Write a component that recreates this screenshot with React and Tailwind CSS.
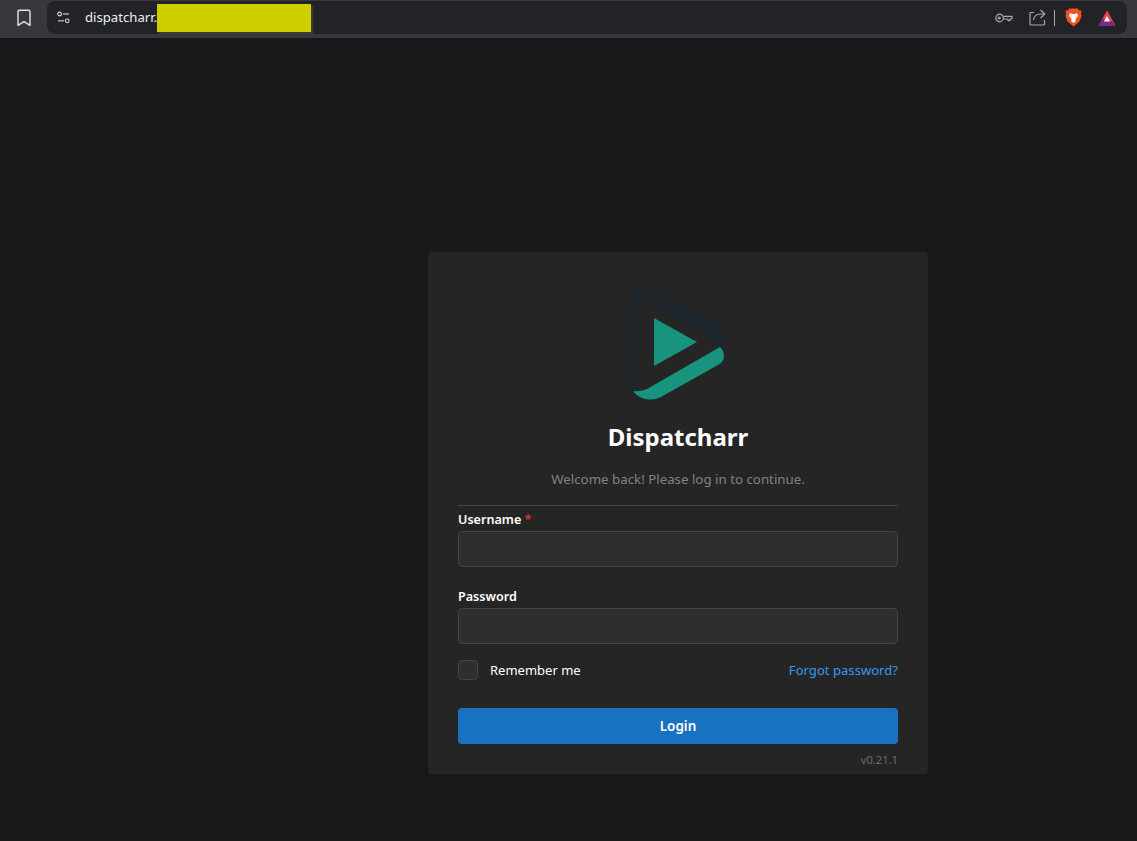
import React from 'react';

const Logo = () => (
  <svg width="110" height="120" viewBox="0 0 110 120" className="block">
    {/* dark outer triangle */}
    <path
      d="M4 100 L4 24 C4 9 13 2 22 2 C27 2 31 4 35 6.5 L94 40 C102 45 106 50 106 57 L97 65 L87 56 L23 18 C19 15.5 17 16.5 17 21 L17 103 Q14 108 10 109 Q4 106 4 100 Z"
      fill="#1f262b"
    />
    {/* green swoosh */}
    <path
      d="M10 109 Q17 110 24 107 L97 65 Q101 69 101 74 Q101 80 95 83 L37 115.5 Q31 118 26 117.5 Q16 117 10 109 Z"
      fill="#17937e"
    />
    {/* play */}
    <path d="M31 36 L74 60 L31 84 Z" fill="#17937e" />
  </svg>
);

const BookmarkIcon = () => (
  <svg width="16" height="18" viewBox="0 0 16 18" fill="none" stroke="#e4e4e6" strokeWidth="1.4" strokeLinejoin="round">
    <path d="M3.5 1.2 H12.5 Q14 1.2 14 2.7 V16.4 L8 12.6 L2 16.4 V2.7 Q2 1.2 3.5 1.2 Z" />
  </svg>
);

const TuneIcon = () => (
  <svg width="13" height="13" viewBox="0 0 14 14" fill="none" stroke="#d8d8da" strokeWidth="1.2">
    <circle cx="2.8" cy="3.2" r="2" />
    <path d="M6.5 3.2 H13" />
    <path d="M1 10.6 H7.5" />
    <circle cx="11" cy="10.6" r="2" />
  </svg>
);

const KeyIcon = () => (
  <svg width="18" height="10" viewBox="0 0 18 10" fill="none" stroke="#a9a9ad" strokeWidth="1.2">
    <circle cx="4.6" cy="5" r="3.8" />
    <circle cx="4.2" cy="5" r="1" />
    <path d="M8.4 3.4 H17 V6 H15 V7.6 H13 V6 H8.4" strokeLinejoin="round" />
  </svg>
);

const ShareIcon = () => (
  <svg width="17" height="17" viewBox="0 0 17 17" fill="none" stroke="#a9a9ad" strokeWidth="1.2">
    <path d="M5 3.5 H2 Q1 3.5 1 4.5 V15 Q1 16 2 16 H14.5 Q15.5 16 15.5 15 V11" />
    <path d="M4.5 11 Q5 5.5 11 5 H15.5" />
    <path d="M11.5 1 L15.8 5 L11.5 9" strokeLinejoin="round" />
  </svg>
);

const BraveIcon = () => (
  <svg width="17" height="19" viewBox="0 0 17 19">
    <path d="M4.5 0.5 H12.5 L14.5 2.5 L16.5 2.5 L16 6 L16.5 8 L14.5 13.5 L8.5 18.5 L2.5 13.5 L0.5 8 L1 6 L0.5 2.5 L2.5 2.5 Z" fill="#f4511e" />
    <path d="M5 5 L7.5 6 H9.5 L12 5 L13 8 L10.5 11 L11 13 L8.5 15 L6 13 L6.5 11 L4 8 Z" fill="#ffffff" />
  </svg>
);

const BatIcon = () => (
  <svg width="18" height="16" viewBox="0 0 18 16">
    <path d="M9 0.5 L17.5 15.5 L9 15.5 L0.5 15.5 Z" fill="#ef4056" />
    <path d="M0.5 15.5 L5 8 L7 11 L6 15.5 Z" fill="#662d91" />
    <path d="M0.5 15.5 H17.5 L13.5 11 H4.5 Z" fill="#7b2a8c" />
    <path d="M9 6 L12 11.5 H6 Z" fill="#ffffff" />
  </svg>
);

const Field = ({ label, required }) => (
  <div>
    <label className="block pt-px text-[12.6px] leading-[18px] font-semibold text-white">
      {label}
      {required && <span className="text-[#e03131]"> *</span>}
    </label>
    <div className="mt-[2px] h-9 rounded border border-[#444444] bg-[#2e2e2e]"></div>
  </div>
);

export default function App() {
  return (
    <div className="h-[841px] overflow-hidden bg-[#18181a] font-['Noto_Sans',sans-serif] text-white">
      {/* browser bar */}
      <div className="flex h-[38px] items-start bg-[#37383c] pt-px">
        <div className="flex h-[33px] w-[47px] items-center justify-center">
          <BookmarkIcon />
        </div>
        <div className="mr-[10px] flex h-[33px] flex-1 items-center rounded-lg bg-[#222327] pl-[10px] pr-[11px]">
          <TuneIcon />
          <span className="ml-[15px] text-[13.15px] text-[#eeeeee]">dispatcharr.</span>
          <div className="h-[28px] w-[154px] bg-[#cfcf00] shadow-[2px_2px_0_#3a3a3c]"></div>
          <div className="ml-auto flex items-center">
            <KeyIcon />
            <div className="ml-4"><ShareIcon /></div>
            <div className="ml-2 h-4 w-px bg-[#a9a9ad]"></div>
            <div className="ml-[10px]"><BraveIcon /></div>
            <div className="ml-4"><BatIcon /></div>
          </div>
        </div>
      </div>

      {/* login card */}
      <div className="pl-[428px] pt-[214px]">
        <div className="flex h-[522px] w-[500px] flex-col rounded bg-[#252525] px-[30px] pt-[30px]">
          <div className="flex flex-col items-center">
            <div className="h-[120px]"><Logo /></div>
            <h1 className="mt-[19px] text-[24px] leading-[32px] font-bold text-white">Dispatcharr</h1>
            <p className="mt-[16px] text-[13.3px] leading-[20px] text-[#828282]">Welcome back! Please log in to continue.</p>
          </div>
          <div className="mt-[16px] h-px bg-[#444444]"></div>
          <div className="mt-[4px] flex flex-col gap-[20px]">
            <Field label="Username" required />
            <Field label="Password" />
          </div>
          <div className="mt-4 flex h-5 items-center justify-between">
            <div className="flex items-center">
              <div className="size-5 rounded border border-[#444444] bg-[#2e2e2e]"></div>
              <span className="ml-3 pt-px text-[13px] text-white">Remember me</span>
            </div>
            <a className="pt-px text-[13.1px] text-[#339af0]">Forgot password?</a>
          </div>
          <button className="mt-[28px] h-9 rounded bg-[#1971c2] text-[13.5px] font-semibold text-white">Login</button>
          <div className="mt-[7px] text-right text-[11.2px] leading-[18px] text-[#6b6b6b]">v0.21.1</div>
        </div>
      </div>
    </div>
  );
}
